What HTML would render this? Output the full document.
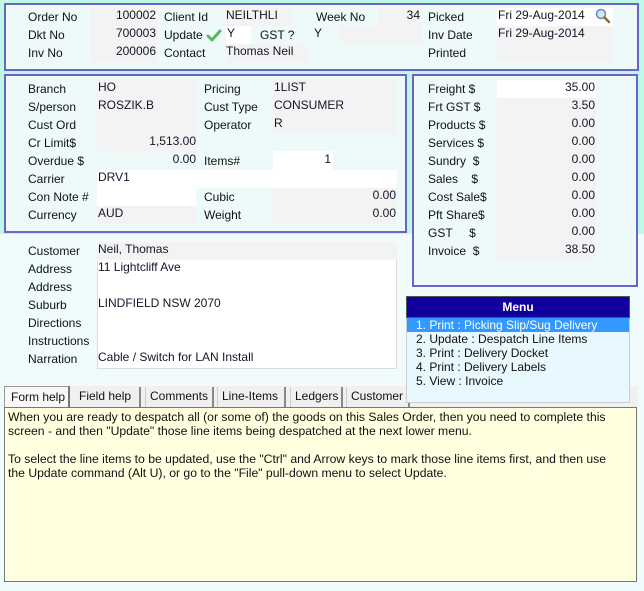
<!DOCTYPE html>
<html><head><meta charset="utf-8"><style>
*{margin:0;padding:0;box-sizing:border-box}
body{width:644px;height:591px;position:relative;background:#f0fcfc;font-family:"Liberation Sans",sans-serif;font-size:12px;color:#111;overflow:hidden}
div{position:absolute}
.aq{left:0;top:0;width:644px;height:234px;background:#c0f8e6}
.p{border:2px solid #6a64c8;background:#eefafa}
.l,.v{height:18px;line-height:18px;white-space:nowrap}
.f{background:#f3f3f3}
.w{background:#fff}
.r{text-align:right}
.v{color:#141428}
.t{top:387px;height:20px;border-right:2px solid #888;border-left:1px solid #ccc;line-height:18px;padding-left:4px;font-size:12px;white-space:nowrap}
.m{left:416px;line-height:14px;font-size:12px;white-space:nowrap}
</style></head><body>
<div class="aq"></div>
<div class="p" style="left:4px;top:3px;width:635px;height:68px"></div>
<div class="p" style="left:4px;top:74px;width:403px;height:159px"></div>
<div class="p" style="left:412px;top:74px;width:226px;height:213px"></div>

<!-- top panel -->
<div class="f" style="left:90px;top:8px;width:68px;height:54px"></div>
<div class="f" style="left:226px;top:8px;width:66px;height:18px"></div>
<div class="f" style="left:378px;top:8px;width:44px;height:18px"></div>
<div class="w" style="left:226px;top:26px;width:25px;height:18px"></div>
<div class="f" style="left:340px;top:26px;width:82px;height:18px"></div>
<div class="f" style="left:226px;top:44px;width:82px;height:18px"></div>
<div class="w" style="left:497px;top:8px;width:116px;height:18px"></div>
<div class="f" style="left:497px;top:26px;width:116px;height:36px"></div>
<div class="l" style="left:28px;top:8px">Order No</div>
<div class="l" style="left:28px;top:26px">Dkt No</div>
<div class="l" style="left:28px;top:44px">Inv No</div>
<div class="v r" style="left:100px;top:6px;width:56px">100002</div>
<div class="v r" style="left:100px;top:24px;width:56px">700003</div>
<div class="v r" style="left:100px;top:42px;width:56px">200006</div>
<div class="l" style="left:164px;top:8px">Client Id</div>
<div class="l" style="left:164px;top:26px">Update</div>
<div class="l" style="left:164px;top:44px">Contact</div>
<svg style="position:absolute;left:206px;top:29px" width="16" height="14" viewBox="0 0 16 14"><path d="M2 7 L6 11 L14 2" fill="none" stroke="#5cb85c" stroke-width="3" stroke-linecap="round" stroke-linejoin="round"/></svg>
<div class="v" style="left:226px;top:6px">NEILTHLI</div>
<div class="v" style="left:227px;top:24px">Y</div>
<div class="l" style="left:260px;top:26px">GST ?</div>
<div class="v" style="left:314px;top:24px">Y</div>
<div class="v" style="left:226px;top:42px">Thomas Neil</div>
<div class="l" style="left:316px;top:8px">Week No</div>
<div class="v r" style="left:390px;top:6px;width:30px">34</div>
<div class="l" style="left:428px;top:8px">Picked</div>
<div class="l" style="left:428px;top:26px">Inv Date</div>
<div class="l" style="left:428px;top:44px">Printed</div>
<div class="v" style="left:498px;top:6px">Fri 29-Aug-2014</div>
<div class="v" style="left:498px;top:24px">Fri 29-Aug-2014</div>
<svg style="position:absolute;left:595px;top:8px" width="16" height="16" viewBox="0 0 16 16"><circle cx="6" cy="6" r="4.5" fill="#cfe8f8" stroke="#6a8aa8" stroke-width="1.5"/><path d="M9.5 9.5 L14 14" stroke="#8a6a3a" stroke-width="2.5" stroke-linecap="round"/></svg>

<!-- panel 2 -->
<div class="f" style="left:97px;top:80px;width:100px;height:72px"></div>
<div class="f" style="left:273px;top:80px;width:123px;height:54px"></div>
<div class="w" style="left:273px;top:151px;width:60px;height:20px"></div>
<div class="w" style="left:97px;top:170px;width:300px;height:18px"></div>
<div class="w" style="left:97px;top:188px;width:99px;height:18px"></div>
<div class="f" style="left:273px;top:188px;width:123px;height:36px"></div>
<div class="f" style="left:97px;top:206px;width:99px;height:18px"></div>
<div class="l" style="left:28px;top:80px">Branch</div>
<div class="l" style="left:28px;top:98px">S/person</div>
<div class="l" style="left:28px;top:116px">Cust Ord</div>
<div class="l" style="left:28px;top:134px">Cr Limit$</div>
<div class="l" style="left:28px;top:152px">Overdue $</div>
<div class="l" style="left:28px;top:170px">Carrier</div>
<div class="l" style="left:28px;top:188px">Con Note #</div>
<div class="l" style="left:28px;top:206px">Currency</div>
<div class="v" style="left:98px;top:78px">HO</div>
<div class="v" style="left:98px;top:96px">ROSZIK.B</div>
<div class="v r" style="left:120px;top:132px;width:76px">1,513.00</div>
<div class="v r" style="left:120px;top:150px;width:76px">0.00</div>
<div class="v" style="left:98px;top:168px">DRV1</div>
<div class="v" style="left:98px;top:204px">AUD</div>
<div class="l" style="left:204px;top:80px">Pricing</div>
<div class="l" style="left:204px;top:98px">Cust Type</div>
<div class="l" style="left:204px;top:116px">Operator</div>
<div class="l" style="left:204px;top:152px">Items#</div>
<div class="l" style="left:204px;top:188px">Cubic</div>
<div class="l" style="left:204px;top:206px">Weight</div>
<div class="v" style="left:274px;top:78px">1LIST</div>
<div class="v" style="left:274px;top:96px">CONSUMER</div>
<div class="v" style="left:274px;top:114px">R</div>
<div class="v r" style="left:290px;top:150px;width:41px">1</div>
<div class="v r" style="left:320px;top:186px;width:76px">0.00</div>
<div class="v r" style="left:320px;top:204px;width:76px">0.00</div>

<!-- panel 3 -->
<div class="w" style="left:497px;top:80px;width:99px;height:18px"></div>
<div class="f" style="left:497px;top:98px;width:99px;height:162px"></div>
<div class="l" style="left:428px;top:80px">Freight $</div>
<div class="l" style="left:428px;top:98px">Frt GST $</div>
<div class="l" style="left:428px;top:116px">Products $</div>
<div class="l" style="left:428px;top:134px">Services $</div>
<div class="l" style="left:428px;top:152px">Sundry &nbsp;$</div>
<div class="l" style="left:428px;top:170px">Sales &nbsp;&nbsp;&nbsp;$</div>
<div class="l" style="left:428px;top:188px">Cost Sale$</div>
<div class="l" style="left:428px;top:206px">Pft Share$</div>
<div class="l" style="left:428px;top:224px">GST &nbsp;&nbsp;&nbsp;&nbsp;$</div>
<div class="l" style="left:428px;top:242px">Invoice &nbsp;$</div>
<div class="v r" style="left:520px;top:78px;width:75px">35.00</div>
<div class="v r" style="left:520px;top:96px;width:75px">3.50</div>
<div class="v r" style="left:520px;top:114px;width:75px">0.00</div>
<div class="v r" style="left:520px;top:132px;width:75px">0.00</div>
<div class="v r" style="left:520px;top:150px;width:75px">0.00</div>
<div class="v r" style="left:520px;top:168px;width:75px">0.00</div>
<div class="v r" style="left:520px;top:186px;width:75px">0.00</div>
<div class="v r" style="left:520px;top:204px;width:75px">0.00</div>
<div class="v r" style="left:520px;top:222px;width:75px">0.00</div>
<div class="v r" style="left:520px;top:240px;width:75px">38.50</div>

<!-- customer -->
<div class="f" style="left:97px;top:242px;width:300px;height:18px"></div>
<div class="w" style="left:97px;top:260px;width:300px;height:109px;border:1px solid #dcdcdc;border-top:none"></div>
<div class="l" style="left:28px;top:242px">Customer</div>
<div class="l" style="left:28px;top:260px">Address</div>
<div class="l" style="left:28px;top:278px">Address</div>
<div class="l" style="left:28px;top:296px">Suburb</div>
<div class="l" style="left:28px;top:314px">Directions</div>
<div class="l" style="left:28px;top:332px">Instructions</div>
<div class="l" style="left:28px;top:350px">Narration</div>
<div class="v" style="left:98px;top:240px">Neil, Thomas</div>
<div class="v" style="left:98px;top:258px">11 Lightcliff Ave</div>
<div class="v" style="left:98px;top:294px">LINDFIELD NSW 2070</div>
<div class="v" style="left:98px;top:348px">Cable / Switch for LAN Install</div>

<!-- tabs -->
<div style="left:4px;top:386px;width:634px;height:21px;background:#f0f0f0"></div>
<div style="left:4px;top:386px;width:66px;height:22px;background:#f8f8f8;border:1px solid #999;border-bottom:none;border-right:2px solid #777;line-height:21px;padding-left:6px;font-size:12px;white-space:nowrap">Form help</div>
<div class="t" style="left:74px;width:67px;border-left:none;padding-left:5px">Field help</div>
<div class="t" style="left:145px;width:69px">Comments</div>
<div class="t" style="left:217px;width:69px">Line-Items</div>
<div class="t" style="left:290px;width:53px">Ledgers</div>
<div class="t" style="left:346px;width:64px">Customer</div>
<div style="left:4px;top:407px;width:633px;height:175px;background:#ffffe0;border:1px solid #777;padding:2px 3px;font-size:12.2px;line-height:14px;color:#111;white-space:nowrap">When you are ready to despatch all (or some of) the goods on this Sales Order, then you need to complete this<br>screen - and then "Update" those line items being despatched at the next lower menu.<br><br>To select the line items to be updated, use the "Ctrl" and Arrow keys to mark those line items first, and then use<br>the Update command (Alt U), or go to the "File" pull-down menu to select Update.</div>

<!-- menu -->
<div style="left:406px;top:296px;width:224px;height:107px;background:#e8f8ff;border:1px solid #ccc"></div>
<div style="left:406px;top:296px;width:224px;height:22px;background:#12009e;border:1px solid #555;color:#fff;font-weight:bold;text-align:center;line-height:20px">Menu</div>
<div style="left:407px;top:318px;width:222px;height:14px;background:#3399ff"></div>
<div class="m" style="top:318px;color:#fff">1. Print : Picking Slip/Sug Delivery</div>
<div class="m" style="top:332px">2. Update : Despatch Line Items</div>
<div class="m" style="top:346px">3. Print : Delivery Docket</div>
<div class="m" style="top:360px">4. Print : Delivery Labels</div>
<div class="m" style="top:374px">5. View : Invoice</div>
</body></html>
